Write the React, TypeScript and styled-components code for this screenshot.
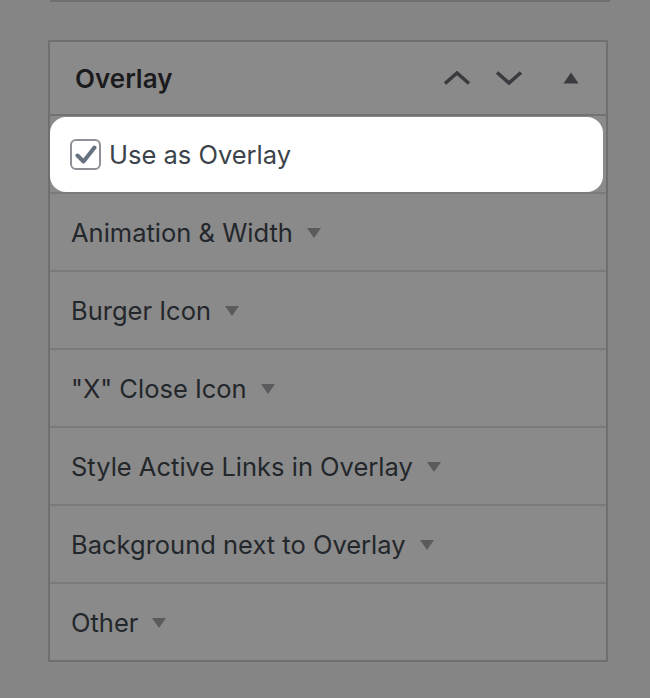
import React from "react";
import styled, { createGlobalStyle } from "styled-components";

const GlobalStyle = createGlobalStyle`
  html, body {
    margin: 0;
    padding: 0;
    background: #858585;
  }
  body {
    font-family: Inter, "Liberation Sans", sans-serif;
  }
`;

const Page = styled.div`
  width: 650px;
  height: 698px;
  padding-left: 48px;
  box-sizing: border-box;
  overflow: hidden;
`;

const PrevPanel = styled.div`
  width: 560px;
  height: 0;
  box-sizing: border-box;
  border-bottom: 2px solid #707070;
  margin-left: 2px;
`;

const Panel = styled.section`
  width: 560px;
  box-sizing: border-box;
  margin-top: 38px;
  border: 2px solid #6f6f6f;
  background: #8a8a8a;
`;

const Header = styled.div`
  height: 72px;
  display: flex;
  align-items: center;
  padding: 0 27px 0 25px;
  border-bottom: 2px solid #727272;
`;

const Title = styled.h2`
  margin: 0;
  flex: 1;
  font-size: 26px;
  font-weight: 600;
  color: #1b1b1d;
`;

const HeaderButtons = styled.div`
  display: flex;
  align-items: center;
  gap: 24px;
  margin-top: -1px;
`;

const IconButton = styled.span<{ $gap?: number }>`
  display: flex;
  margin-left: ${(p) => p.$gap ?? 0}px;
  color: #3b3b3f;
`;

const Highlight = styled.label`
  display: flex;
  align-items: center;
  height: 75px;
  margin: 1px 3px 0 0;
  padding-left: 20px;
  background: #ffffff;
  border-radius: 16px;
  font-size: 25.5px;
  color: #3c434a;
  cursor: pointer;
`;

const Box = styled.span`
  width: 27px;
  height: 27px;
  border: 2px solid #8d9095;
  border-radius: 6px;
  display: flex;
  align-items: center;
  justify-content: center;
  margin-right: 8px;
  color: #66727e;
`;

const Row = styled.div`
  height: 76px;
  display: flex;
  align-items: center;
  padding-left: 21px;
  border-top: 2px solid #7a7a7a;
  font-size: 25.5px;
  color: #23272b;
`;

const Caret = styled.span`
  width: 0;
  height: 0;
  margin-left: 14px;
  margin-top: 2px;
  border-left: 7.5px solid transparent;
  border-right: 7.5px solid transparent;
  border-top: 10px solid #5b5b5d;
`;

const sections = [
  "Animation & Width",
  "Burger Icon",
  "\"X\" Close Icon",
  "Style Active Links in Overlay",
  "Background next to Overlay",
  "Other",
];

export default function App() {
  return (
    <Page>
      <GlobalStyle />
      <PrevPanel />
      <Panel>
        <Header>
          <Title>Overlay</Title>
          <HeaderButtons>
            <IconButton>
              <svg width="28" height="14" viewBox="0 0 28 14">
                <path d="M2 12.5 L14 2 L26 12.5" fill="none" stroke="currentColor" strokeWidth="3.6" />
              </svg>
            </IconButton>
            <IconButton>
              <svg width="28" height="14" viewBox="0 0 28 14">
                <path d="M2 1.5 L14 12 L26 1.5" fill="none" stroke="currentColor" strokeWidth="3.6" />
              </svg>
            </IconButton>
            <IconButton $gap={16}>
              <svg width="16" height="12" viewBox="0 0 16 12">
                <path d="M8 0.5 L15.5 11.5 L0.5 11.5 Z" fill="currentColor" />
              </svg>
            </IconButton>
          </HeaderButtons>
        </Header>
        <Highlight>
          <Box>
            <svg width="22" height="20" viewBox="0 0 22 20">
              <path d="M2.5 10.5 L8.5 16.5 L19.5 2.5" fill="none" stroke="currentColor" strokeWidth="4" strokeLinecap="round" strokeLinejoin="round" />
            </svg>
          </Box>
          Use as Overlay
        </Highlight>
        {sections.map((s) => (
          <Row key={s}>
            {s}
            <Caret />
          </Row>
        ))}
      </Panel>
    </Page>
  );
}
